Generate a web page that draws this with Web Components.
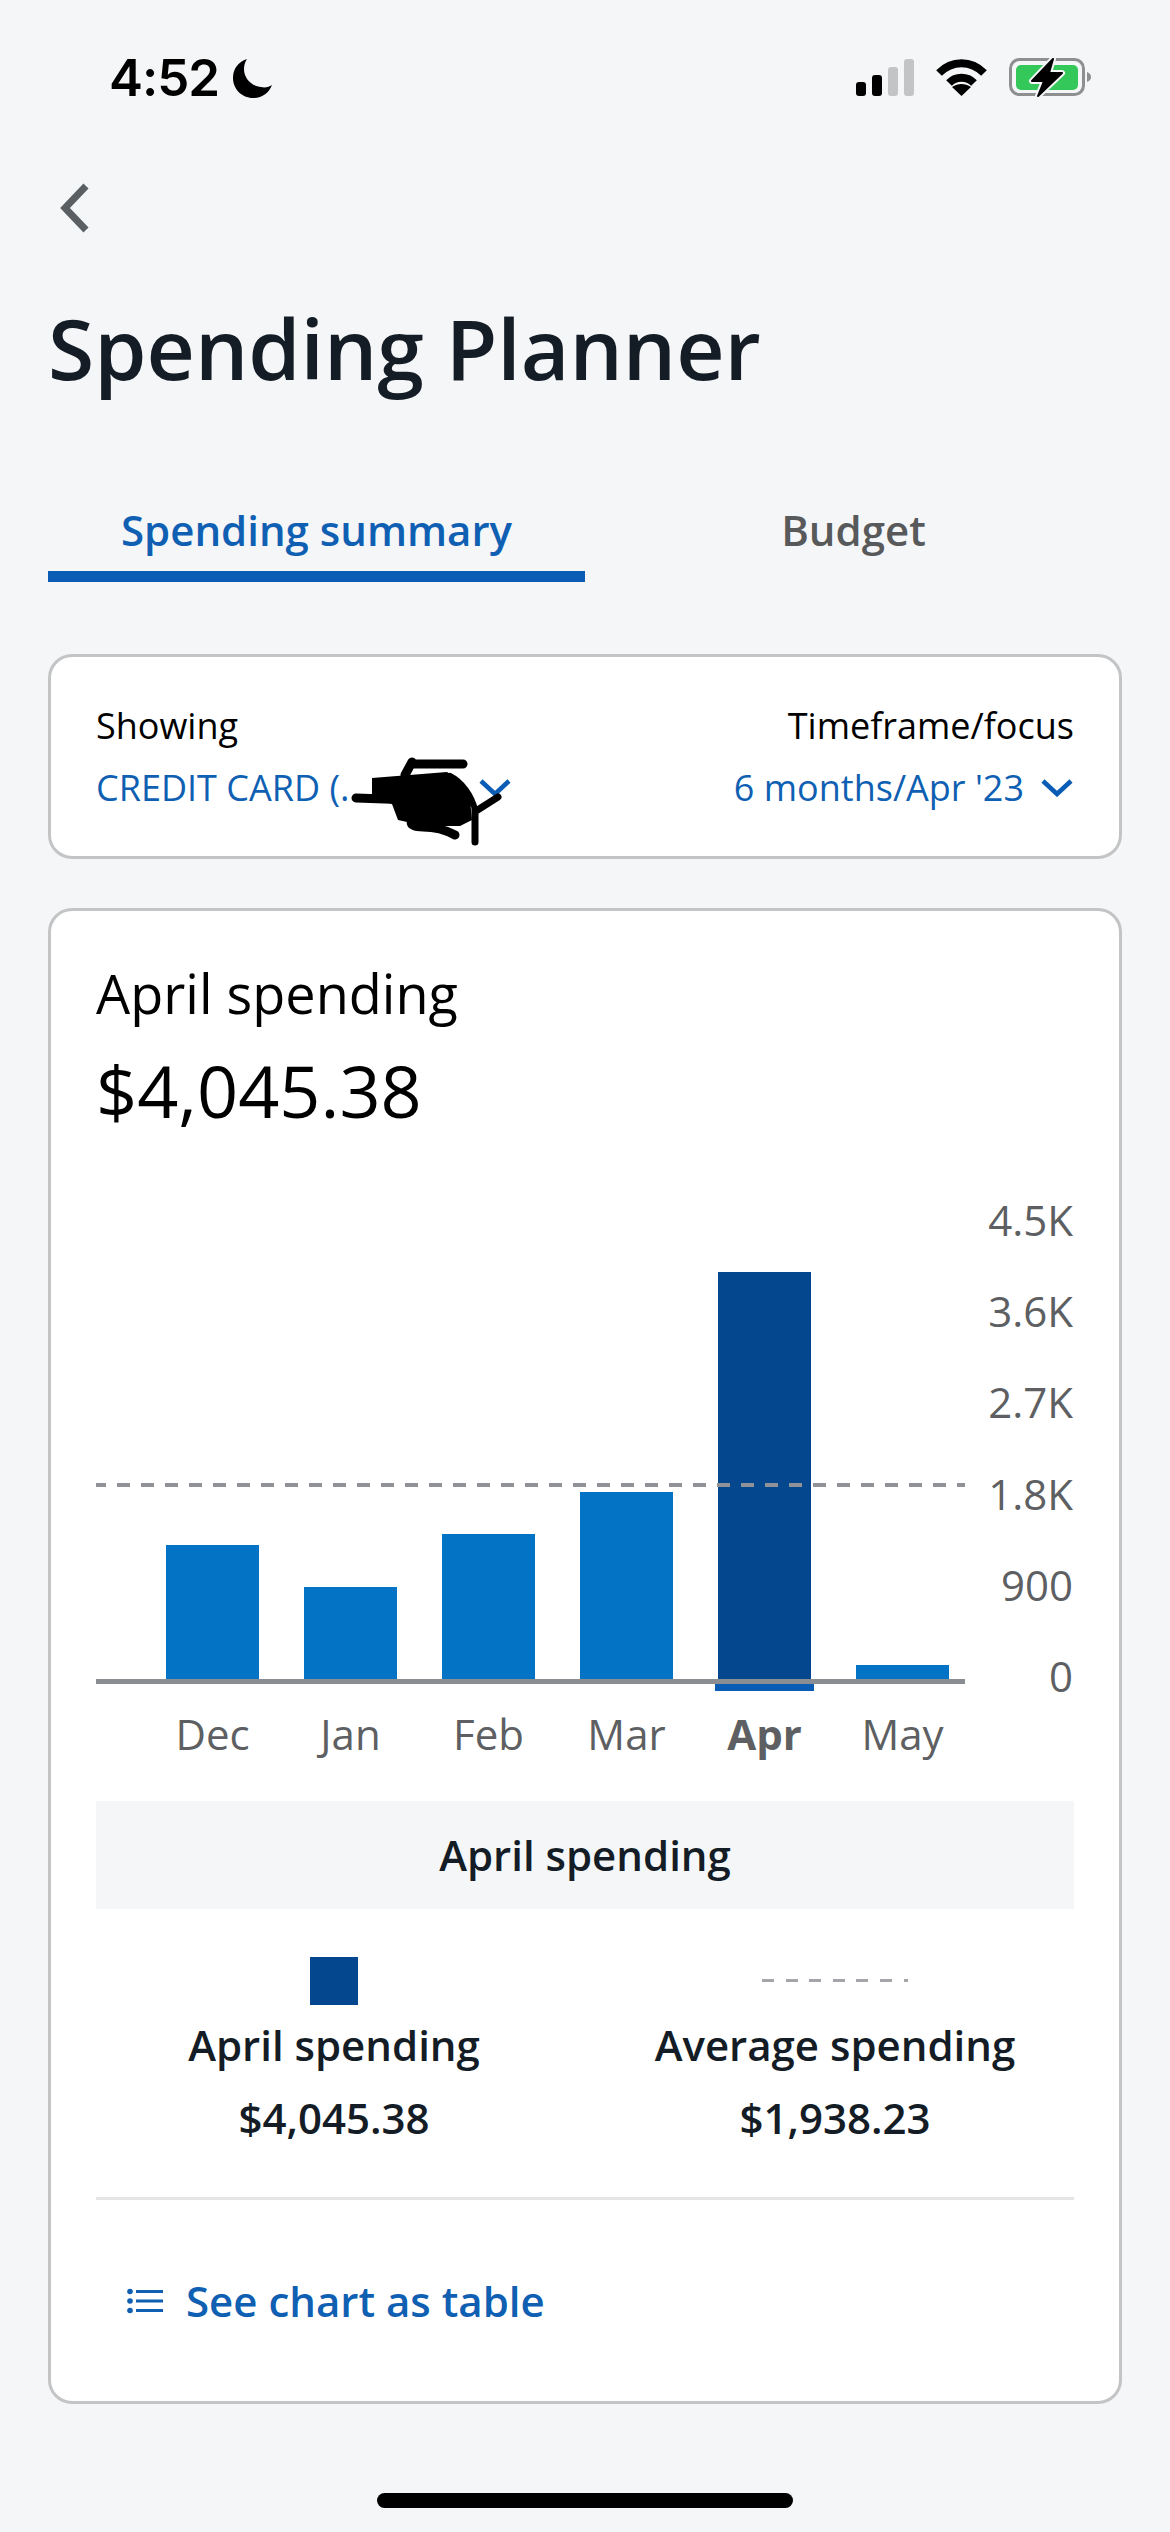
<!DOCTYPE html>
<html lang="en">
<head>
<meta charset="utf-8">
<title>Spending Planner</title>
<style>
  html, body { margin: 0; background: #f5f6f8; }
  body { font-family: "Open Sans", sans-serif; color: #141c26; }
</style>
</head>
<body>
<planner-app></planner-app>

<script>
const BLUE = '#0f5fb3';

class StatusBar extends HTMLElement {
  constructor() { super(); this.attachShadow({ mode: 'open' }); }
  connectedCallback() {
    this.shadowRoot.innerHTML = `
      <style>
        :host { display: flex; justify-content: space-between; align-items: flex-start; height: 130px; padding: 0 79px 0 109px; box-sizing: border-box; }
        .left { display: flex; gap: 14px; margin-top: 59px; align-items: flex-start; }
        .time { font: 600 51px/38px Inter, "Liberation Sans", sans-serif; color: #000; letter-spacing: -1px; }
        svg { display: block; }
        .icons { margin-top: 58px; }
      </style>
      <div class="left">
        <span class="time">4:52</span>
        <svg width="39" height="39" viewBox="0 0 39 39"><path d="M14 0 C5 3 0 10 0 19 C0 30 9 39 20 39 C29 39 36 34 39 26 C36 28 32 29 28 28 C18 27 11 19 11 10 C11 6 12 3 14 0 Z" fill="#000"/></svg>
      </div>
      <svg class="icons" width="235" height="40" viewBox="0 0 235 40">
        <rect x="0" y="24" width="10" height="14" rx="3" fill="#000"/>
        <rect x="16" y="17" width="10" height="21" rx="3" fill="#000"/>
        <rect x="32" y="9" width="10" height="29" rx="3" fill="#c3c4c6"/>
        <rect x="48" y="1" width="10" height="37" rx="3" fill="#c3c4c6"/>
        <g transform="translate(81 1)" fill="none" stroke="#000" stroke-width="8">
          <path d="M2 14 C15 1 34 1 47 14"/>
          <path d="M12 24 C19 17 30 17 37 24"/>
          <path d="M24.5 37 L15 28 C21 24 28 24 34 28 Z" fill="#000" stroke="none"/>
        </g>
        <rect x="154.5" y="1.5" width="73" height="35" rx="9" fill="none" stroke="#8e8f91" stroke-width="3"/>
        <rect x="160" y="7" width="62" height="25" rx="5" fill="#34c759"/>
        <path d="M231 14 C234 15 235 17 235 19 C235 21 234 23 231 24 Z" fill="#8e8f91"/>
        <path d="M197 1 L176 23 L188 23 L182 38 L206 15 L193 15 Z" fill="#000" stroke="#f5f6f8" stroke-width="6" stroke-linejoin="round"/>
        <path d="M197 1 L176 23 L188 23 L182 38 L206 15 L193 15 Z" fill="#000" stroke="#000" stroke-width="2" stroke-linejoin="round"/>
      </svg>`;
  }
}
customElements.define('status-bar', StatusBar);

class PageHeader extends HTMLElement {
  constructor() { super(); this.attachShadow({ mode: 'open' }); }
  connectedCallback() {
    this.shadowRoot.innerHTML = `
      <style>
        :host { display: block; }
        .nav { height: 168px; padding: 53px 0 0 60px; box-sizing: border-box; }
        svg { display: block; }
        h1 { margin: 0 0 0 48px; font: 600 84px/100px "Open Sans", sans-serif; color: #141c26; }
      </style>
      <div class="nav">
        <svg width="30" height="50" viewBox="0 0 30 50"><path d="M26 3 L5 25 L26 47" fill="none" stroke="#5a5f63" stroke-width="7"/></svg>
      </div>
      <h1><slot></slot></h1>`;
  }
}
customElements.define('page-header', PageHeader);

class TabBar extends HTMLElement {
  constructor() { super(); this.attachShadow({ mode: 'open' }); }
  connectedCallback() {
    this.shadowRoot.innerHTML = `
      <style>
        :host { display: grid; grid-template-columns: 537px 537px; margin: 102px 0 0 48px; }
        .tab { height: 82px; box-sizing: border-box; text-align: center; font: 600 42px/60px "Open Sans", sans-serif; color: #58595b; }
        .active { color: ${BLUE}; border-bottom: 11px solid #0b5cb5; }
      </style>
      <div class="tab active">Spending summary</div>
      <div class="tab">Budget</div>`;
  }
}
customElements.define('tab-bar', TabBar);

class PlannerCard extends HTMLElement {
  constructor() { super(); this.attachShadow({ mode: 'open' }); }
  connectedCallback() {
    this.shadowRoot.innerHTML = `
      <style>
        :host { display: block; position: relative; box-sizing: border-box; width: 1074px; margin-left: 48px; background: #fff; border: 3px solid #c2c4c6; border-radius: 24px; padding: 0 45px; }
      </style>
      <slot></slot>`;
  }
}
customElements.define('planner-card', PlannerCard);

class FilterRow extends HTMLElement {
  constructor() { super(); this.attachShadow({ mode: 'open' }); }
  connectedCallback() {
    const chevron = `<svg width="32" height="18" viewBox="0 0 32 18"><path d="M2 2 L16 15 L30 2" fill="none" stroke="#0b5cb5" stroke-width="4.6"/></svg>`;
    this.shadowRoot.innerHTML = `
      <style>
        :host { display: flex; justify-content: space-between; height: 199px; padding-top: 44px; box-sizing: border-box; font-family: "Open Sans", sans-serif; }
        .label { font-size: 36px; line-height: 50px; color: #000; }
        .value { display: flex; align-items: center; margin-top: 12px; font-size: 36px; line-height: 50px; color: ${BLUE}; }
        .right { text-align: right; }
        .right .value { justify-content: flex-end; gap: 17px; padding-right: 1px; }
        .masked { width: 111px; }
        .scribble { position: absolute; left: -3px; top: -3px; pointer-events: none; }
      </style>
      <div>
        <div class="label">Showing</div>
        <div class="value"><span>CREDIT CARD (...</span><span class="masked"></span>${chevron}</div>
      </div>
      <div class="right">
        <div class="label">Timeframe/focus</div>
        <div class="value"><span>6 months/Apr '23</span>${chevron}</div>
      </div>
      <svg class="scribble" width="1074" height="205" viewBox="48 654 1074 205">
        <path d="M372 778 L447 772 L462 782 L470 800 L472 820 L460 826 L425 826 L398 820 L392 804 L372 798 Z" fill="#000"/>
        <g fill="none" stroke="#000" stroke-linecap="round" stroke-linejoin="round">
          <path stroke-width="9" d="M413 764 L463 764 M412 762 L405 775"/>
          <path stroke-width="9" d="M356 798 L470 802"/>
          <path stroke-width="6" d="M450 776 C462 782 472 796 475 810"/>
          <path stroke-width="7" d="M475 810 L475 842 M476 811 L498 797"/>
          <path stroke-width="9" d="M419 818 C408 820 408 827 423 827 C433 827 444 829 455 835"/>
        </g>
      </svg>`;
  }
}
customElements.define('filter-row', FilterRow);

class SpendingChart extends HTMLElement {
  constructor() { super(); this.attachShadow({ mode: 'open' }); }
  connectedCallback() {
    // top of each bar, measured up from the axis
    const bars = [
      { m: 'Dec', h: 136 }, { m: 'Jan', h: 94 }, { m: 'Feb', h: 147 },
      { m: 'Mar', h: 189 }, { m: 'Apr', h: 409, on: true }, { m: 'May', h: 16 }
    ];
    const ticks = ['4.5K', '3.6K', '2.7K', '1.8K', '900', '0'];
    this.shadowRoot.innerHTML = `
      <style>
        :host { display: grid; grid-template-columns: 869px 1fr; margin-top: 41.5px; font-family: "Open Sans", sans-serif; color: #5d5f62; }
        .plot { position: relative; height: 507px; display: flex; align-items: flex-end; gap: 45px; padding: 0 0 2.5px 70px; box-sizing: border-box; }
        .bar { width: 93px; background: #0373c6; flex: none; }
        .bar.on { background: #04478f; position: relative; }
        .bar.on::after { content: ''; position: absolute; left: -3px; right: -3px; top: 100%; height: 10px; background: #0b5cb5; }
        .axis { position: absolute; left: 0; right: 0; bottom: 0; height: 5px; background: #8a8d91; }
        .avg { position: absolute; left: 0; right: 0; top: 306px; height: 4px; background: repeating-linear-gradient(90deg, #8f9296 0 13px, transparent 13px 24px) -3px 0; }
        .months { display: flex; gap: 45px; padding-left: 70px; margin-top: 25px; }
        .months span { width: 93px; flex: none; text-align: center; font-size: 42px; line-height: 50px; white-space: nowrap; }
        .months .on { font-weight: 700; }
        .ticks { display: grid; grid-auto-rows: 91.2px; margin-top: -2.5px; padding-right: 1px; text-align: right; font-size: 42px; line-height: 91.2px; }
      </style>
      <div>
        <div class="plot">
          ${bars.map(b => `<div class="bar${b.on ? ' on' : ''}" style="height:${b.h}px"></div>`).join('')}
          <div class="avg"></div>
          <div class="axis"></div>
        </div>
        <div class="months">
          ${bars.map(b => `<span class="${b.on ? 'on' : ''}">${b.m}</span>`).join('')}
        </div>
      </div>
      <div class="ticks">${ticks.map(t => `<span>${t}</span>`).join('')}</div>`;
  }
}
customElements.define('spending-chart', SpendingChart);

class LegendItem extends HTMLElement {
  constructor() { super(); this.attachShadow({ mode: 'open' }); }
  connectedCallback() {
    const dashed = this.getAttribute('kind') === 'line';
    this.shadowRoot.innerHTML = `
      <style>
        :host { display: block; text-align: center; font-family: "Open Sans", sans-serif; font-weight: 600; color: #141c26; }
        .marker { height: 48px; display: flex; align-items: center; justify-content: center; }
        .swatch { width: 48px; height: 48px; background: #04478f; }
        .line { width: 146px; height: 3px; background: repeating-linear-gradient(90deg, #a3a5a8 0 12px, transparent 12px 23.6px); }
        .label { margin-top: 10.5px; font-size: 42px; line-height: 60px; }
        .value { margin-top: 12.5px; font-size: 42px; line-height: 60px; }
      </style>
      <div class="marker"><div class="${dashed ? 'line' : 'swatch'}"></div></div>
      <div class="label">${this.getAttribute('label')}</div>
      <div class="value">${this.getAttribute('value')}</div>`;
  }
}
customElements.define('legend-item', LegendItem);

class SpendingSummary extends HTMLElement {
  constructor() { super(); this.attachShadow({ mode: 'open' }); }
  connectedCallback() {
    this.shadowRoot.innerHTML = `
      <style>
        :host { display: block; padding: 47px 0 70px; font-family: "Open Sans", sans-serif; }
        .title { font-size: 54px; line-height: 70px; color: #000; }
        .amount { margin-top: 17px; font-size: 72px; line-height: 90px; color: #000; }
        .banner { margin-top: 42.5px; height: 107.5px; line-height: 107.5px; text-align: center; background: #f5f6f8; font-size: 42px; font-weight: 600; color: #141c26; }
        .legend { display: grid; grid-template-columns: 476px 526px; margin-top: 48px; }
        .rule { margin-top: 49px; height: 3px; background: #e4e5e6; }
        .link { display: flex; align-items: center; gap: 23px; margin-top: 71px; padding-left: 31px; font-size: 42px; line-height: 60px; font-weight: 600; color: ${BLUE}; }
        svg { display: block; flex: none; }
      </style>
      <div class="title">April spending</div>
      <div class="amount">$4,045.38</div>
      <spending-chart></spending-chart>
      <div class="banner">April spending</div>
      <div class="legend">
        <legend-item label="April spending" value="$4,045.38"></legend-item>
        <legend-item kind="line" label="Average spending" value="$1,938.23"></legend-item>
      </div>
      <div class="rule"></div>
      <div class="link">
        <svg width="36" height="26" viewBox="0 0 36 26" fill="#0f5fb3">
          <circle cx="3" cy="3.5" r="2.8"/><circle cx="3" cy="13" r="2.8"/><circle cx="3" cy="22.5" r="2.8"/>
          <rect x="9" y="2" width="27" height="3"/><rect x="9" y="11.5" width="27" height="3"/><rect x="9" y="21" width="27" height="3"/>
        </svg>
        <span>See chart as table</span>
      </div>`;
  }
}
customElements.define('spending-summary', SpendingSummary);

class PlannerApp extends HTMLElement {
  constructor() { super(); this.attachShadow({ mode: 'open' }); }
  connectedCallback() {
    this.shadowRoot.innerHTML = `
      <style>
        :host { display: block; width: 1170px; height: 2532px; overflow: hidden; background: #f5f6f8; }
        .filters { margin-top: 72px; }
        .summary { margin-top: 49px; }
        .home { width: 416px; height: 15px; margin: 89px auto 0; border-radius: 8px; background: #000; }
      </style>
      <status-bar></status-bar>
      <page-header>Spending Planner</page-header>
      <tab-bar></tab-bar>
      <planner-card class="filters"><filter-row></filter-row></planner-card>
      <planner-card class="summary"><spending-summary></spending-summary></planner-card>
      <div class="home"></div>`;
  }
}
customElements.define('planner-app', PlannerApp);
</script>
</body>
</html>
